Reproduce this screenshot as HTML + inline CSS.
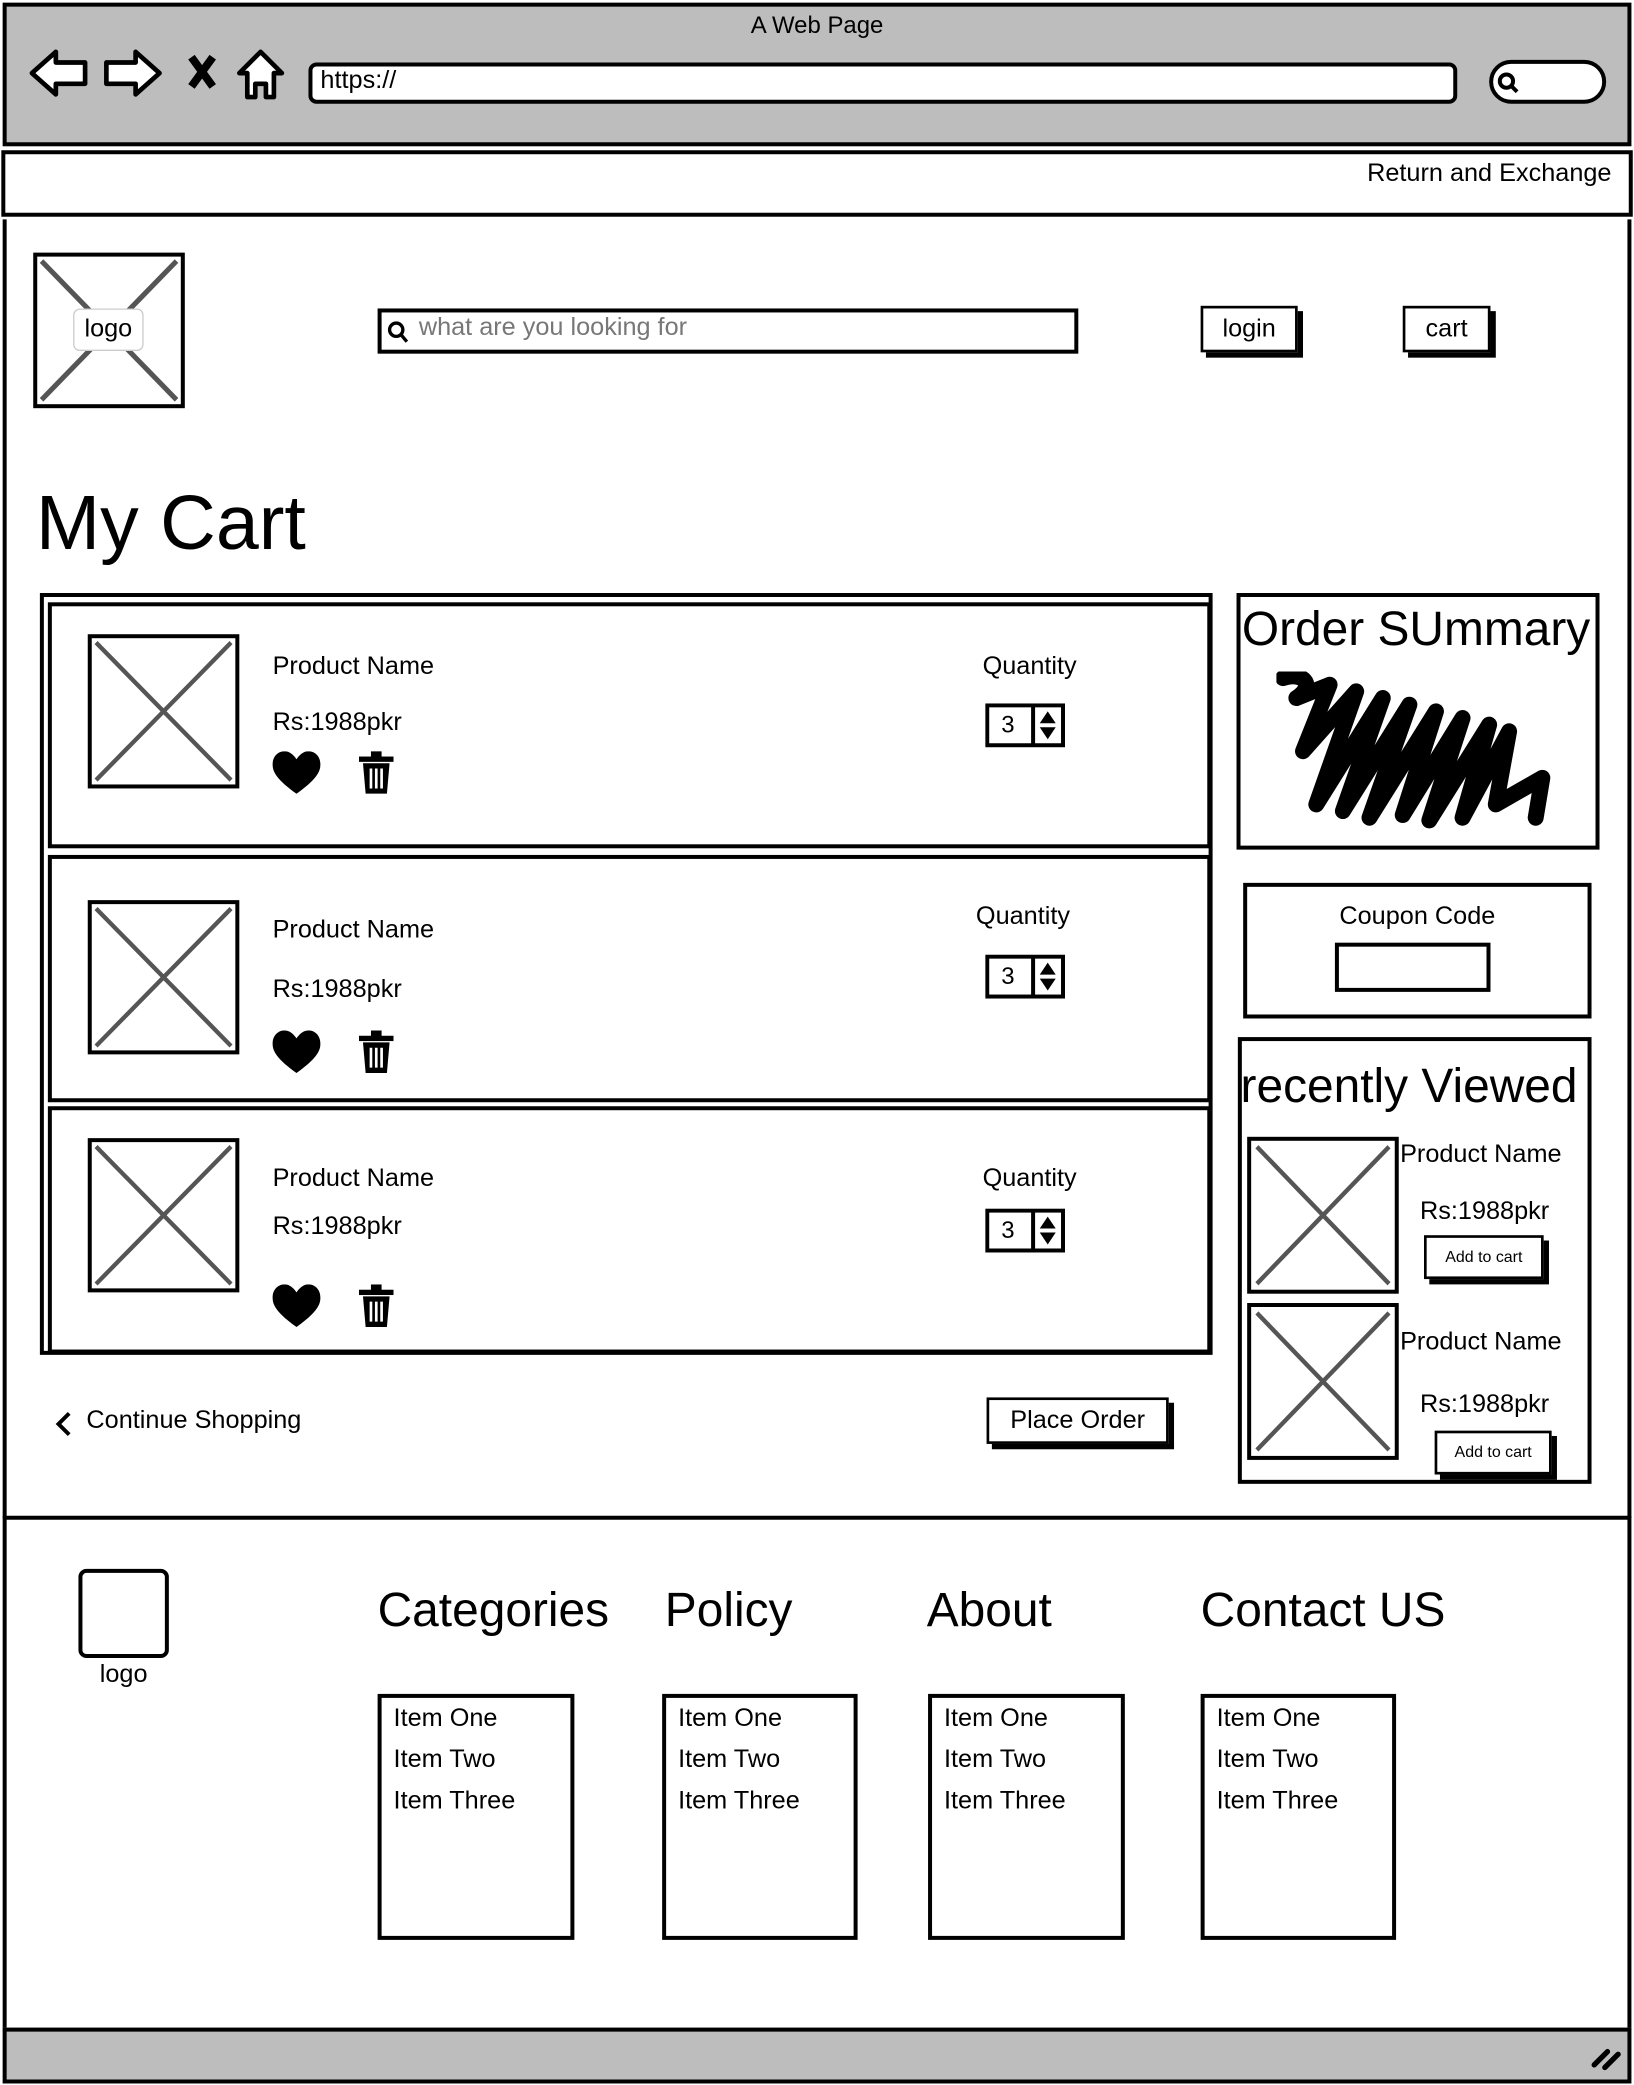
<!DOCTYPE html>
<html><head><meta charset="utf-8"><style>
html,body{margin:0;padding:0;width:1634px;height:2084px;overflow:hidden;background:#fff}
#w{position:absolute;left:0;top:0;width:1229px;height:1568px;transform:scale(1.3296);transform-origin:0 0;font-family:"Liberation Sans",sans-serif;color:#000}
.a{position:absolute;box-sizing:border-box}
.b{border:3px solid #000}
.t{position:absolute;white-space:nowrap}
.x{position:absolute;box-sizing:border-box;border:3px solid #000;background:#fff}
.x svg{position:absolute;left:0;top:0;width:100%;height:100%}
.btn{position:absolute;box-sizing:border-box;border:2px solid #000;background:#fff;box-shadow:4px 4px 0 #000;text-align:center;font-size:19px}
.li{font-size:19px;line-height:31px;padding:0 0 0 9px}
</style></head><body><div id="w">
<div class="a b" style="left:2px;top:2px;width:1225px;height:108px;background:#bdbdbd"></div>
<div class="t" style="left:0;width:1229px;text-align:center;top:9px;font-size:18px">A Web Page</div>
<svg class="a" style="left:20px;top:33px" width="200" height="45" viewBox="0 0 200 45">
<path d="M4 22 L22 6 L22 14 L44 14 L44 30 L22 30 L22 38 Z" fill="#fff" stroke="#000" stroke-width="3.5" stroke-linejoin="round"/>
<path d="M100 22 L82 6 L82 14 L60 14 L60 30 L82 30 L82 38 Z" fill="#fff" stroke="#000" stroke-width="3.5" stroke-linejoin="round"/>
<path d="M124 10 L140 32 M140 10 L124 32" stroke="#000" stroke-width="6"/>
<path d="M160 22 L176 6 L192 22 L186 22 L186 40 L180 40 L180 30 L172 30 L172 40 L166 40 L166 22 Z" fill="#fff" stroke="#000" stroke-width="3.5" stroke-linejoin="round"/>
</svg>
<div class="a b" style="left:232px;top:47px;width:864px;height:31px;background:#fff;border-radius:6px"></div>
<div class="t" style="left:241px;top:50px;font-size:19px">https://</div>
<div class="a b" style="left:1120px;top:45px;width:88px;height:33px;background:#fff;border-radius:17px"></div>
<svg class="a" style="left:1124px;top:52px" width="20" height="20"><circle cx="9" cy="9" r="5" fill="none" stroke="#000" stroke-width="3"/><path d="M12 12 L17 17" stroke="#000" stroke-width="3"/></svg>
<div class="a b" style="left:1px;top:113px;width:1227px;height:50px"></div>
<div class="t" style="right:17px;top:120px;font-size:19px">Return and Exchange</div>
<div class="a" style="left:2px;top:165px;width:1225px;height:977px;border-left:3px solid #000;border-right:3px solid #000"></div>
<div class="x" style="left:25px;top:190px;width:114px;height:117px"><svg viewBox="0 0 100 100" preserveAspectRatio="none"><path d="M3 3L97 97M97 3L3 97" stroke="#555" stroke-width="3.5"/></svg></div>
<div class="a" style="left:55px;top:232px;width:53px;height:32px;background:#fff;border:1px solid #ccc;border-radius:5px;text-align:center;font-size:19px;line-height:30px">logo</div>
<div class="a b" style="left:284px;top:232px;width:527px;height:34px"></div>
<svg class="a" style="left:290px;top:240px" width="20" height="20"><circle cx="8" cy="8" r="5" fill="none" stroke="#000" stroke-width="2.5"/><path d="M11 11 L16 17" stroke="#000" stroke-width="2.5"/></svg>
<div class="t" style="left:315px;top:236px;font-size:19px;color:#777">what are you looking for</div>
<div class="btn" style="left:903px;top:230px;width:73px;height:35px;line-height:31px">login</div>
<div class="btn" style="left:1055px;top:230px;width:66px;height:35px;line-height:31px">cart</div>
<div class="t" style="left:27px;top:360px;font-size:58px">My Cart</div>
<div class="a b" style="left:30px;top:446px;width:882px;height:573px"></div>
<div class="a b" style="left:36px;top:453px;width:875px;height:185px"></div>
<div class="a b" style="left:36px;top:643px;width:875px;height:186px"></div>
<div class="a b" style="left:36px;top:832px;width:875px;height:186px"></div>
<div class="x" style="left:66px;top:477px;width:114px;height:116px"><svg viewBox="0 0 100 100" preserveAspectRatio="none"><path d="M3 3L97 97M97 3L3 97" stroke="#555" stroke-width="3"/></svg></div>
<div class="x" style="left:66px;top:677px;width:114px;height:116px"><svg viewBox="0 0 100 100" preserveAspectRatio="none"><path d="M3 3L97 97M97 3L3 97" stroke="#555" stroke-width="3"/></svg></div>
<div class="x" style="left:66px;top:856px;width:114px;height:116px"><svg viewBox="0 0 100 100" preserveAspectRatio="none"><path d="M3 3L97 97M97 3L3 97" stroke="#555" stroke-width="3"/></svg></div>
<div class="t" style="left:205px;top:491px;font-size:19px">Product Name</div>
<div class="t" style="left:205px;top:533px;font-size:19px">Rs:1988pkr</div>
<div class="t" style="left:205px;top:689px;font-size:19px">Product Name</div>
<div class="t" style="left:205px;top:734px;font-size:19px">Rs:1988pkr</div>
<div class="t" style="left:205px;top:876px;font-size:19px">Product Name</div>
<div class="t" style="left:205px;top:912px;font-size:19px">Rs:1988pkr</div>
<div class="t" style="left:739px;top:491px;font-size:19px">Quantity</div>
<div class="t" style="left:734px;top:679px;font-size:19px">Quantity</div>
<div class="t" style="left:739px;top:876px;font-size:19px">Quantity</div>
<svg width="0" height="0" style="position:absolute"><defs>
<g id="h"><path d="M18 32 C4 22 0 16 0 10 C0 4 4 0 9 0 C13 0 16 3 18 6 C20 3 23 0 27 0 C32 0 36 4 36 10 C36 16 32 22 18 32Z" fill="#000"/></g>
<g id="tr"><rect x="0" y="4" width="26" height="4" fill="#000"/><rect x="9" y="0" width="8" height="5" fill="#000"/><path d="M3 9 L5 32 L21 32 L23 9 Z" fill="#000"/><path d="M9 13V28M13 13V28M17 13V28" stroke="#fff" stroke-width="2"/></g>
<g id="sp"><rect x="1.5" y="1.5" width="57" height="30" fill="#fff" stroke="#000" stroke-width="3"/><path d="M36 1.5V31.5" stroke="#000" stroke-width="3"/><path d="M41 15 L47 6 L53 15Z M41 18 L47 27 L53 18Z" fill="#000"/></g>
</defs></svg>
<svg class="a" style="left:205px;top:565px" width="36" height="32"><use href="#h"/></svg>
<svg class="a" style="left:270px;top:565px" width="26" height="32"><use href="#tr"/></svg>
<svg class="a" style="left:205px;top:775px" width="36" height="32"><use href="#h"/></svg>
<svg class="a" style="left:270px;top:775px" width="26" height="32"><use href="#tr"/></svg>
<svg class="a" style="left:205px;top:966px" width="36" height="32"><use href="#h"/></svg>
<svg class="a" style="left:270px;top:966px" width="26" height="32"><use href="#tr"/></svg>
<svg class="a" style="left:741px;top:529px" width="60" height="34"><use href="#sp"/></svg>
<div class="t" style="left:753px;top:535px;font-size:18px">3</div>
<svg class="a" style="left:741px;top:718px" width="60" height="34"><use href="#sp"/></svg>
<div class="t" style="left:753px;top:724px;font-size:18px">3</div>
<svg class="a" style="left:741px;top:909px" width="60" height="34"><use href="#sp"/></svg>
<div class="t" style="left:753px;top:915px;font-size:18px">3</div>
<svg class="a" style="left:40px;top:1060px" width="16" height="22"><path d="M12 3 L4 11 L12 19" fill="none" stroke="#000" stroke-width="3"/></svg>
<div class="t" style="left:65px;top:1058px;font-size:19px">Continue Shopping</div>
<div class="btn" style="left:742px;top:1051px;width:137px;height:35px;line-height:31px">Place Order</div>
<div class="a b" style="left:930px;top:446px;width:273px;height:193px"></div>
<div class="t" style="left:934px;top:452px;font-size:36px">Order SUmmary</div>
<svg class="a" style="left:960px;top:505px" width="210" height="120"><path d="M5 5 C20 0 30 10 15 20 L40 10 L20 60 L60 15 L30 100 L80 20 L50 105 L100 25 L70 110 L120 30 L95 108 L140 35 L115 112 L160 40 L140 110 L175 45 L165 100 L200 80 L195 110" fill="none" stroke="#000" stroke-width="12" stroke-linejoin="round" stroke-linecap="round"/></svg>
<div class="a b" style="left:935px;top:664px;width:262px;height:102px"></div>
<div class="t" style="left:935px;width:262px;text-align:center;top:679px;font-size:19px">Coupon Code</div>
<div class="a b" style="left:1004px;top:709px;width:117px;height:37px"></div>
<div class="a b" style="left:931px;top:780px;width:266px;height:336px"></div>
<div class="t" style="left:933px;top:796px;font-size:36px">recently Viewed</div>
<div class="x" style="left:938px;top:855px;width:114px;height:118px"><svg viewBox="0 0 100 100" preserveAspectRatio="none"><path d="M4 4L96 96M96 4L4 96" stroke="#555" stroke-width="3"/></svg></div>
<div class="x" style="left:938px;top:980px;width:114px;height:118px"><svg viewBox="0 0 100 100" preserveAspectRatio="none"><path d="M4 4L96 96M96 4L4 96" stroke="#555" stroke-width="3"/></svg></div>
<div class="t" style="left:1053px;top:858px;font-size:19px">Product Name</div>
<div class="t" style="left:1068px;top:901px;font-size:19px">Rs:1988pkr</div>
<div class="btn" style="left:1071px;top:929px;width:90px;height:33px;line-height:29px;font-size:12px">Add to cart</div>
<div class="t" style="left:1053px;top:999px;font-size:19px">Product Name</div>
<div class="t" style="left:1068px;top:1046px;font-size:19px">Rs:1988pkr</div>
<div class="btn" style="left:1079px;top:1076px;width:88px;height:33px;line-height:29px;font-size:12px">Add to cart</div>
<div class="a" style="left:2px;top:1140px;width:1225px;height:388px;border:3px solid #000"></div>
<div class="a b" style="left:59px;top:1180px;width:68px;height:67px;border-radius:6px"></div>
<div class="t" style="left:59px;width:68px;text-align:center;top:1249px;font-size:19px">logo</div>
<div class="t" style="left:284px;top:1190px;font-size:36px">Categories</div>
<div class="t" style="left:500px;top:1190px;font-size:36px">Policy</div>
<div class="t" style="left:697px;top:1190px;font-size:36px">About</div>
<div class="t" style="left:903px;top:1190px;font-size:36px">Contact US</div>
<div class="a b li" style="left:284px;top:1274px;width:148px;height:185px">Item One<br>Item Two<br>Item Three</div>
<div class="a b li" style="left:498px;top:1274px;width:147px;height:185px">Item One<br>Item Two<br>Item Three</div>
<div class="a b li" style="left:698px;top:1274px;width:148px;height:185px">Item One<br>Item Two<br>Item Three</div>
<div class="a b li" style="left:903px;top:1274px;width:147px;height:185px">Item One<br>Item Two<br>Item Three</div>
<div class="a b" style="left:2px;top:1525px;width:1225px;height:42px;background:#bdbdbd"></div>
<svg class="a" style="left:1195px;top:1535px" width="28" height="24"><path d="M4 18 L14 8 M12 20 L22 10" stroke="#000" stroke-width="4" stroke-linecap="round"/></svg>
</div></body></html>
